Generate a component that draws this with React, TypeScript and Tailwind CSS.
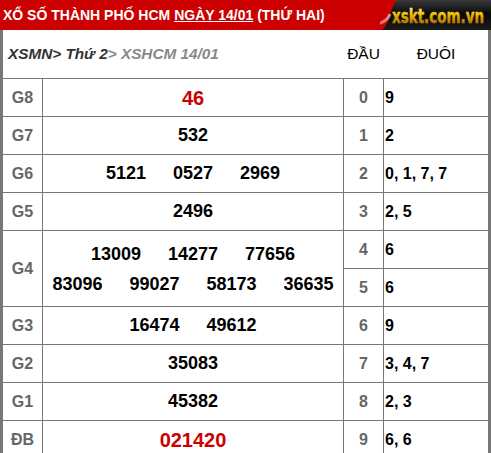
import React from "react";

const Logo = () => (
  <svg width="111" height="30" viewBox="0 0 111 30" className="block shrink-0">
    <defs>
      <linearGradient id="blk" x1="0" y1="0" x2="0" y2="1">
        <stop offset="0" stopColor="#3a3a3a" />
        <stop offset="0.45" stopColor="#0a0a0a" />
        <stop offset="1" stopColor="#1a1a1a" />
      </linearGradient>
      <linearGradient id="gold" gradientUnits="userSpaceOnUse" x1="0" y1="-13" x2="0" y2="0">
        <stop offset="0" stopColor="#fff6b0" />
        <stop offset="0.5" stopColor="#f2c200" />
        <stop offset="1" stopColor="#b57a00" />
      </linearGradient>
      <linearGradient id="shine" x1="0" y1="0" x2="1" y2="0">
        <stop offset="0" stopColor="#ffffff" stopOpacity="0" />
        <stop offset="1" stopColor="#ffffff" stopOpacity="0.55" />
      </linearGradient>
    </defs>
    <path d="M18 0 C 11 0, 10 30, 0 30 L 111 30 L 111 0 Z" fill="url(#blk)" />
    <path d="M-30 30 C -10 24, 6 26, 10 14" stroke="url(#shine)" strokeWidth="3" fill="none" />
    <text
      transform="translate(12 22.5) scale(1 1.3)"
      x="0"
      y="0"
      fontFamily="'DejaVu Sans Condensed','DejaVu Sans',sans-serif"
      fontWeight="bold"
      fontSize="15"
      fill="url(#gold)"
      stroke="url(#gold)"
      strokeWidth="0.3"
    >
      xskt.com.vn
    </text>
  </svg>
);

const Label = ({ children, span }: { children: React.ReactNode; span?: boolean }) => (
  <div
    className={`bg-white flex items-center justify-center text-[16px] font-bold text-[#666] ${
      span ? "row-span-2" : ""
    }`}
  >
    {children}
  </div>
);

const Nums = ({ items, red }: { items: string[]; red?: boolean }) => (
  <div
    className={`bg-white flex items-center justify-center gap-[27px] font-bold ${
      red ? "text-[20px] text-[#cc0000]" : "text-[18px] text-black"
    }`}
  >
    {items.map((n) => (
      <span key={n}>{n}</span>
    ))}
  </div>
);

const Dau = ({ children }: { children: React.ReactNode }) => (
  <div className="bg-white flex items-center justify-center text-[16px] font-bold text-[#666]">
    {children}
  </div>
);

const Duoi = ({ children }: { children: React.ReactNode }) => (
  <div className="bg-white flex items-center pl-[1px] text-[16px] font-bold text-black">
    {children}
  </div>
);

export default function App() {
  return (
    <div className="w-[491px] font-['Liberation_Sans',Arial,sans-serif] bg-white">
      <div className="h-[30px] bg-[#cc0000] flex items-center">
        <div className="pl-[3px] text-[14px] font-bold text-white whitespace-nowrap">
          XỔ SỐ THÀNH PHỐ HCM <span className="underline">NGÀY 14/01</span> (THỨ HAI)
        </div>
        <div className="ml-auto">
          <Logo />
        </div>
      </div>
      <div className="h-[48px] border-x-[3px] border-[#777] bg-white flex items-center">
        <div className="w-[340px] pl-[5px] text-[15.3px] font-bold italic whitespace-nowrap">
          <span className="text-[#333]">XSMN&gt; Thứ 2</span>
          <span className="text-[#888]">&gt; XSHCM 14/01</span>
        </div>
        <div className="w-[41px] text-center text-[15.5px] text-black">ĐẦU</div>
        <div className="flex-1 text-center text-[15.5px] text-black">ĐUÔI</div>
      </div>
      <div className="grid grid-cols-[39px_300px_39px_104px] auto-rows-[37px] gap-px bg-[#777] px-[3px] pt-px">
        <Label>G8</Label>
        <Nums items={["46"]} red />
        <Dau>0</Dau>
        <Duoi>9</Duoi>

        <Label>G7</Label>
        <Nums items={["532"]} />
        <Dau>1</Dau>
        <Duoi>2</Duoi>

        <Label>G6</Label>
        <Nums items={["5121", "0527", "2969"]} />
        <Dau>2</Dau>
        <Duoi>0, 1, 7, 7</Duoi>

        <Label>G5</Label>
        <Nums items={["2496"]} />
        <Dau>3</Dau>
        <Duoi>2, 5</Duoi>

        <Label span>G4</Label>
        <div className="row-span-2 bg-white flex flex-col items-center justify-center text-[18px] font-bold text-black leading-[30px]">
          <div className="flex gap-[27px]">
            <span>13009</span>
            <span>14277</span>
            <span>77656</span>
          </div>
          <div className="flex gap-[27px]">
            <span>83096</span>
            <span>99027</span>
            <span>58173</span>
            <span>36635</span>
          </div>
        </div>
        <Dau>4</Dau>
        <Duoi>6</Duoi>
        <Dau>5</Dau>
        <Duoi>6</Duoi>

        <Label>G3</Label>
        <Nums items={["16474", "49612"]} />
        <Dau>6</Dau>
        <Duoi>9</Duoi>

        <Label>G2</Label>
        <Nums items={["35083"]} />
        <Dau>7</Dau>
        <Duoi>3, 4, 7</Duoi>

        <Label>G1</Label>
        <Nums items={["45382"]} />
        <Dau>8</Dau>
        <Duoi>2, 3</Duoi>

        <Label>ĐB</Label>
        <Nums items={["021420"]} red />
        <Dau>9</Dau>
        <Duoi>6, 6</Duoi>
      </div>
    </div>
  );
}
